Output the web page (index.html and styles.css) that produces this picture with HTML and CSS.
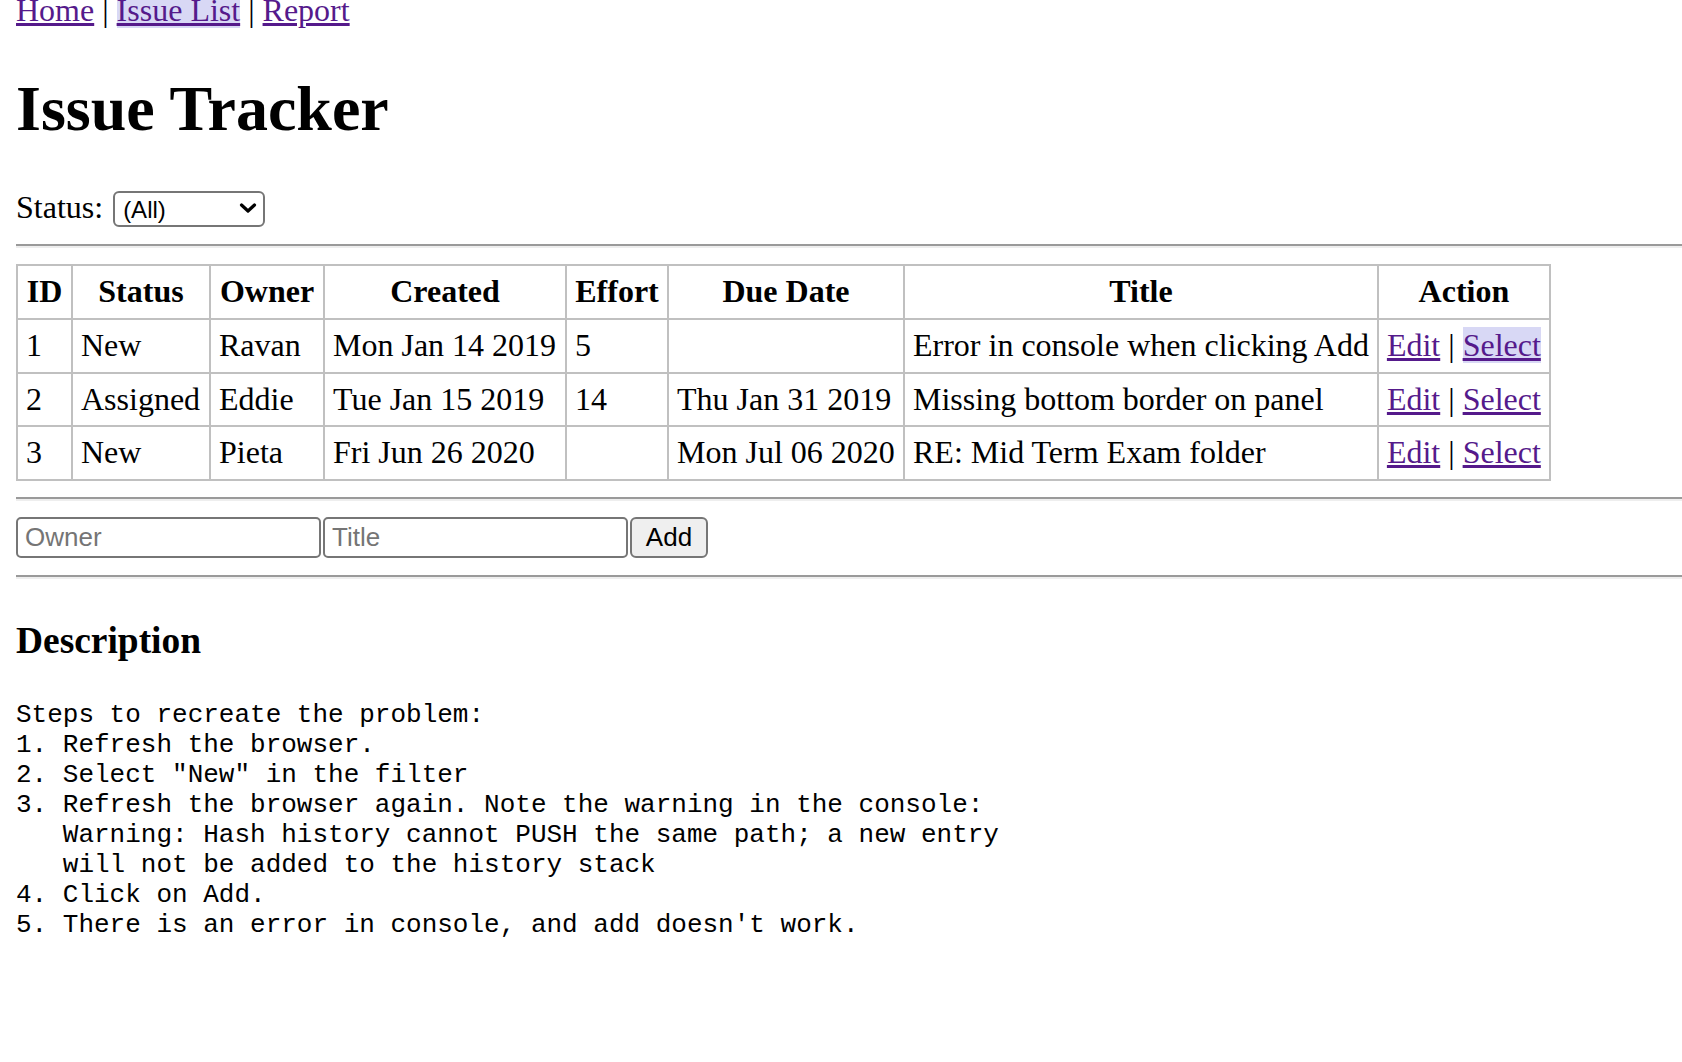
FILE: index.html
```html
<!DOCTYPE html>
<html lang="en">
<head>
<meta charset="utf-8">
<title>Issue Tracker</title>
<link rel="stylesheet" href="styles.css">
</head>
<body>
<div class="nav"><a href="#/" class="nav-link">Home</a> | <a href="#/issues" class="nav-link active">Issue List</a> | <a href="#/report" class="nav-link">Report</a></div>
<h1 class="page-title">Issue Tracker</h1>
<div class="filter">
  <span class="filter-label">Status:</span>
  <span class="select-wrap">
    <select class="status-select">
      <option>(All)</option>
      <option>New</option>
      <option>Assigned</option>
      <option>Fixed</option>
      <option>Closed</option>
    </select>
    <svg class="chevron" width="18" height="10" viewBox="0 0 18 10" aria-hidden="true"><polyline points="2.5,2 9,8 15.5,2" fill="none" stroke="#000" stroke-width="3.2" stroke-linecap="round" stroke-linejoin="round"/></svg>
  </span>
</div>
<hr class="rule">
<table class="bordered-table">
  <thead>
    <tr>
      <th class="col-id">ID</th>
      <th class="col-status">Status</th>
      <th class="col-owner">Owner</th>
      <th class="col-created">Created</th>
      <th class="col-effort">Effort</th>
      <th class="col-due">Due Date</th>
      <th class="col-title">Title</th>
      <th class="col-action">Action</th>
    </tr>
  </thead>
  <tbody>
    <tr>
      <td>1</td><td>New</td><td>Ravan</td><td>Mon Jan 14 2019</td><td>5</td><td></td><td>Error in console when clicking Add</td>
      <td><a href="#/edit/1" class="row-link">Edit</a> | <a href="#/issues/1" class="row-link active">Select</a></td>
    </tr>
    <tr>
      <td>2</td><td>Assigned</td><td>Eddie</td><td>Tue Jan 15 2019</td><td>14</td><td>Thu Jan 31 2019</td><td>Missing bottom border on panel</td>
      <td><a href="#/edit/2" class="row-link">Edit</a> | <a href="#/issues/2" class="row-link">Select</a></td>
    </tr>
    <tr>
      <td>3</td><td>New</td><td>Pieta</td><td>Fri Jun 26 2020</td><td></td><td>Mon Jul 06 2020</td><td>RE: Mid Term Exam folder</td>
      <td><a href="#/edit/3" class="row-link">Edit</a> | <a href="#/issues/3" class="row-link">Select</a></td>
    </tr>
  </tbody>
</table>
<hr class="rule">
<form class="add-form"><input class="field" type="text" name="owner" placeholder="Owner"><input class="field" type="text" name="title" placeholder="Title"><button class="add-btn" type="button">Add</button></form>
<hr class="rule">
<h3 class="section-title">Description</h3>
<pre class="description">Steps to recreate the problem:
1. Refresh the browser.
2. Select "New" in the filter
3. Refresh the browser again. Note the warning in the console:
   Warning: Hash history cannot PUSH the same path; a new entry
   will not be added to the history stack
4. Click on Add.
5. There is an error in console, and add doesn't work.</pre>
</body>
</html>
```

FILE: styles.css
```css
html {
  background: #fff;
}

body {
  margin: 0 0 0 16px;
  font-family: "Liberation Serif", "Times New Roman", serif;
  font-size: 32px;
  color: #000;
}

.nav {
  margin-top: -8px;
  line-height: 37px;
}

.nav-link,
.row-link {
  color: #551a8b;
  text-decoration: underline;
}

.active {
  background-color: #d8d8f5;
}

.page-title {
  font-size: 64px;
  font-weight: bold;
  line-height: 74px;
  margin: 43px 0 0;
}

.filter {
  display: flex;
  align-items: flex-start;
  height: 43px;
  margin-top: 39px;
}

.filter-label {
  line-height: 37px;
  padding-top: 4px;
}

.select-wrap {
  position: relative;
  display: block;
  margin: 6px 0 0 10px;
}

.status-select {
  appearance: none;
  -webkit-appearance: none;
  display: block;
  box-sizing: border-box;
  width: 152px;
  height: 36px;
  margin: 0;
  padding: 0 0 0 8px;
  border: 2px solid #767676;
  border-radius: 6px;
  background: #fff;
  color: #000;
  font-family: "Liberation Sans", Arial, sans-serif;
  font-size: 24px;
}

.chevron {
  position: absolute;
  right: 8px;
  top: 12px;
  pointer-events: none;
}

.rule {
  height: 0;
  margin: 16px 0;
  border: 0;
  border-top: 2px solid #9a9a9a;
  border-bottom: 2px solid #eeeeee;
}

.bordered-table {
  border-collapse: collapse;
  margin-bottom: 2px;
}

.bordered-table th,
.bordered-table td {
  border: 2px solid silver;
  padding: 8px;
  line-height: 35.8px;
  font-size: 32px;
  white-space: nowrap;
}

.bordered-table th {
  font-weight: bold;
  text-align: center;
}

.bordered-table td {
  text-align: left;
}

.col-id { width: 37px; }
.col-status { width: 120px; }
.col-owner { width: 96px; }
.col-created { width: 224px; }
.col-effort { width: 84px; }
.col-due { width: 218px; }
.col-title { width: 455px; }
.col-action { width: 154px; }

.add-form {
  display: flex;
  align-items: flex-start;
  height: 42px;
  margin: 0;
}

.field {
  box-sizing: border-box;
  width: 305px;
  height: 41px;
  margin: 0 2px 0 0;
  padding: 0 7px;
  border: 2px solid #767676;
  border-radius: 5px;
  background: #fff;
  font-family: "Liberation Sans", Arial, sans-serif;
  font-size: 26px;
  color: #000;
}

.field::placeholder {
  color: #757575;
}

.add-btn {
  box-sizing: border-box;
  width: 78px;
  height: 41px;
  margin: 0;
  padding: 0;
  border: 2px solid #767676;
  border-radius: 6px;
  background: #efefef;
  color: #000;
  font-family: "Liberation Sans", Arial, sans-serif;
  font-size: 26px;
}

.section-title {
  font-size: 37.44px;
  font-weight: bold;
  margin: 39.5px 0 0;
}

.description {
  margin: 38px 0 0;
  font-family: "Liberation Mono", "Courier New", monospace;
  font-size: 26px;
  line-height: 30px;
}
```
